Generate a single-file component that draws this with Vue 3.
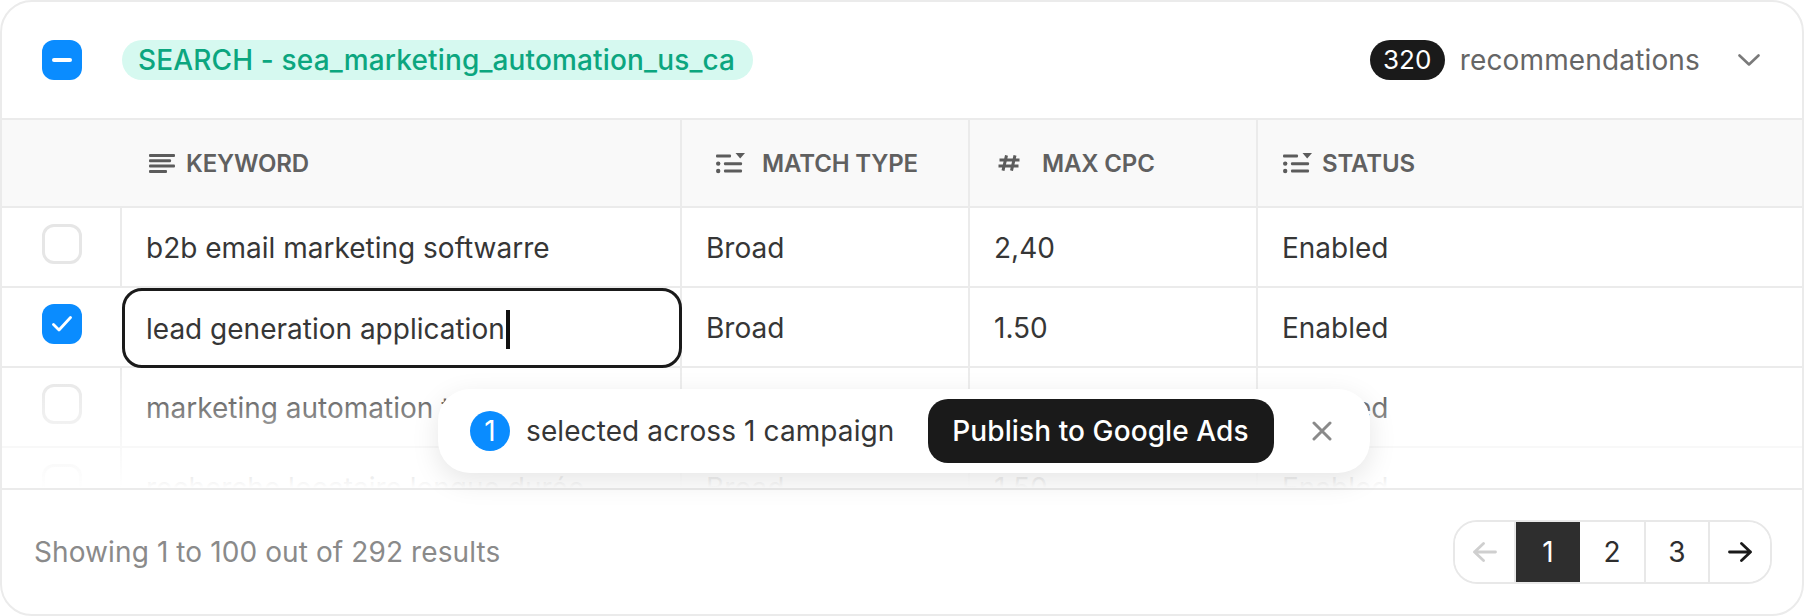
<template>
  <div class="card">
    <div class="top">
      <span class="check on">
        <svg width="20" height="4" viewBox="0 0 20 4"><rect width="20" height="4" rx="2" fill="#fff" /></svg>
      </span>
      <span class="pill">SEARCH - sea_marketing_automation_us_ca</span>
      <span class="count">320</span>
      <span class="rec">recommendations</span>
      <svg class="chevron" width="22" height="12" viewBox="0 0 22 12" fill="none" stroke="#7a7a7a" stroke-width="2.6" stroke-linecap="round" stroke-linejoin="round">
        <path d="M1.5 1.5 11 10.5l9.5-9" />
      </svg>
    </div>

    <div class="head">
      <div class="hcell first"></div>
      <div class="hcell h-keyword">
        <svg width="26" height="19" viewBox="0 0 26 19" fill="#5c5c5c">
          <rect width="26" height="3" y="0" rx="1" />
          <rect width="22" height="3" y="5.2" rx="1" />
          <rect width="26" height="3" y="10.6" rx="1" />
          <rect width="18" height="3" y="16" rx="1" />
        </svg>
        KEYWORD
      </div>
      <div class="hcell h-match">
        <svg width="29" height="21" viewBox="0 0 29 21" fill="#5c5c5c">
          <rect x="0" y="1.5" width="15" height="3" rx="1" />
          <path d="M19.5 0h9.5L24.2 5.5z" />
          <circle cx="2.2" cy="10.6" r="2.2" />
          <rect x="8" y="9.2" width="18" height="3" rx="1" />
          <circle cx="2.2" cy="18" r="2.2" />
          <rect x="8" y="16.6" width="18" height="3" rx="1" />
        </svg>
        MATCH TYPE
      </div>
      <div class="hcell h-cpc">
        <svg width="22" height="16" viewBox="0 0 22 16" fill="none" stroke="#5c5c5c" stroke-width="3">
          <path d="M8.5 0.3 5 15.7M17 0.3 13.5 15.7M1.5 5h20M0.5 11h20" />
        </svg>
        MAX CPC
      </div>
      <div class="hcell h-status">
        <svg width="29" height="21" viewBox="0 0 29 21" fill="#5c5c5c">
          <rect x="0" y="1.5" width="15" height="3" rx="1" />
          <path d="M19.5 0h9.5L24.2 5.5z" />
          <circle cx="2.2" cy="10.6" r="2.2" />
          <rect x="8" y="9.2" width="18" height="3" rx="1" />
          <circle cx="2.2" cy="18" r="2.2" />
          <rect x="8" y="16.6" width="18" height="3" rx="1" />
        </svg>
        STATUS
      </div>
    </div>

    <div class="body">
      <div v-for="row in rows" :key="row.keyword" class="row">
        <div class="cell pick">
          <span v-if="row.editing" class="check on">
            <svg width="20" height="16" viewBox="0 0 20 16" fill="none" stroke="#fff" stroke-width="2.8" stroke-linecap="round" stroke-linejoin="round">
              <path d="M1.5 8.5 7 14 18.5 1.5" />
            </svg>
          </span>
          <span v-else class="check"></span>
        </div>
        <div class="cell" :class="{ editing: row.editing }">
          {{ row.keyword }}<span v-if="row.editing" class="caret"></span>
        </div>
        <div class="cell">{{ row.match }}</div>
        <div class="cell">{{ row.cpc }}</div>
        <div class="cell">{{ row.status }}</div>
      </div>
      <div class="fade"></div>
    </div>

    <div class="foot">
      <span class="showing">Showing 1 to 100 out of 292 results</span>
      <div class="pager">
        <button class="page prev">
          <svg width="24" height="20" viewBox="0 0 24 20" fill="none" stroke="#cfcfcf" stroke-width="2.8" stroke-linecap="round" stroke-linejoin="round">
            <path d="M22.5 10h-21M10.5 1.5 1.5 10l9 8.5" />
          </svg>
        </button>
        <button class="page active">1</button>
        <button class="page">2</button>
        <button class="page ruled">3</button>
        <button class="page next">
          <svg width="24" height="20" viewBox="0 0 24 20" fill="none" stroke="#1a1a1a" stroke-width="2.8" stroke-linecap="round" stroke-linejoin="round">
            <path d="M1.5 10h21M13.5 1.5l9 8.5-9 8.5" />
          </svg>
        </button>
      </div>
    </div>

    <div class="toast">
      <span class="num">1</span>
      <span class="toast-text">selected across 1 campaign</span>
      <button class="publish">Publish to Google Ads</button>
      <svg class="close" width="20" height="20" viewBox="0 0 20 20" fill="none" stroke="#8a8a8a" stroke-width="3" stroke-linecap="round">
        <path d="M2 2l16 16M18 2 2 18" />
      </svg>
    </div>
  </div>
</template>

<script setup>
const rows = [
  { keyword: 'b2b email marketing softwarre', match: 'Broad', cpc: '2,40', status: 'Enabled' },
  { keyword: 'lead generation application', match: 'Broad', cpc: '1.50', status: 'Enabled', editing: true },
  { keyword: 'marketing automation tools', match: 'Broad', cpc: '1.50', status: 'Enabled' },
  { keyword: 'recherche locataire longue durée', match: 'Broad', cpc: '1.50', status: 'Enabled' },
]
</script>

<style>
body { margin: 0; background: #fff; }
</style>

<style scoped>
.card {
  position: relative;
  box-sizing: border-box;
  width: 1804px;
  height: 616px;
  display: flex;
  flex-direction: column;
  background: #fff;
  border: 2px solid #ebebeb;
  border-radius: 32px;
  overflow: hidden;
  font-family: Inter, "Liberation Sans", sans-serif;
  font-size: 28px;
  color: #363636;
}
.top {
  box-sizing: border-box;
  flex: none;
  height: 118px;
  display: flex;
  align-items: center;
  padding: 0 42px 0 40px;
  border-bottom: 2px solid #ebebeb;
}
.check {
  box-sizing: border-box;
  flex: none;
  width: 40px;
  height: 40px;
  display: flex;
  align-items: center;
  justify-content: center;
  border: 3px solid #e6e6e6;
  border-radius: 12px;
  background: #fff;
}
.check.on { background: #0a8cff; border: none; }
.pill {
  margin-left: 40px;
  height: 40px;
  line-height: 40px;
  padding: 0 18px 0 16px;
  border-radius: 20px;
  background: #d6f9f0;
  color: #0ca67f;
  font-weight: 500;
  letter-spacing: 0.15px;
}
.count {
  margin-left: auto;
  box-sizing: border-box;
  height: 40px;
  width: 75px;
  line-height: 40px;
  text-align: center;
  border-radius: 20px;
  background: #1a1a1a;
  color: #fff;
  font-size: 26px;
}
.rec { margin-left: 15px; color: #666; letter-spacing: 0.15px; }
.chevron { margin-left: 38px; }

.head,
.row {
  display: grid;
  grid-template-columns: 118px 560px 288px 288px 1fr;
}
.head {
  flex: none;
  box-sizing: border-box;
  height: 88px;
  background: #f9f9f9;
  border-bottom: 2px solid #ebebeb;
}
.hcell {
  display: flex;
  align-items: center;
  border-left: 2px solid #ebebeb;
  font-size: 24px;
  font-weight: 600;
  color: #606060;
  letter-spacing: -0.15px;
}
.hcell.first { border-left: none; }
.h-keyword { border-left: none; padding-left: 29px; gap: 11px; }
.h-match { padding-left: 34px; gap: 17px; }
.h-cpc { padding-left: 28px; gap: 22px; }
.h-status { padding-left: 25px; gap: 10px; }

.body {
  position: relative;
  flex: none;
  height: 280px;
  overflow: hidden;
}
.row {
  box-sizing: border-box;
  height: 80px;
  border-bottom: 2px solid #ebebeb;
}
.cell {
  position: relative;
  display: flex;
  align-items: center;
  border-left: 2px solid #ebebeb;
  padding: 2px 0 0 24px;
}
.cell.pick {
  border-left: none;
  padding: 16px 0 0 40px;
  align-items: flex-start;
}
.cell.editing {
  z-index: 1;
  margin: 0 -2px -2px 2px;
  background: #fff;
  border: 3px solid #1a1a1a;
  border-radius: 20px;
  padding-left: 21px;
}
.caret {
  width: 4px;
  height: 39px;
  background: #111;
  margin-left: 1px;
}
.fade {
  position: absolute;
  z-index: 2;
  left: 0;
  right: 0;
  bottom: 0;
  height: 121px;
  background: linear-gradient(to bottom, rgba(255, 255, 255, 0), #fff);
  pointer-events: none;
}

.foot {
  flex: 1;
  display: flex;
  align-items: center;
  justify-content: space-between;
  border-top: 2px solid #ebebeb;
  padding: 0 30px 0 32px;
}
.showing { color: #8a8a8a; letter-spacing: 0.1px; }
.pager {
  display: flex;
  height: 64px;
  box-sizing: border-box;
  border: 2px solid #e8e8e8;
  border-radius: 24px;
  overflow: hidden;
}
.page {
  box-sizing: border-box;
  width: 64px;
  display: flex;
  align-items: center;
  justify-content: center;
  padding: 0;
  border: none;
  background: #fff;
  font: inherit;
  color: #2e2e2e;
}
.page.prev { width: 61px; border-right: 2px solid #e8e8e8; }
.page.active { background: #2e2e2e; color: #fff; }
.page.ruled { width: 66px; border-left: 2px solid #e8e8e8; border-right: 2px solid #e8e8e8; }
.page.next { width: 60px; }

.toast {
  position: absolute;
  z-index: 3;
  left: 436px;
  top: 387px;
  box-sizing: border-box;
  width: 932px;
  height: 84px;
  display: flex;
  align-items: center;
  padding-left: 32px;
  background: #fff;
  border-radius: 32px;
  box-shadow: 0 8px 28px rgba(0, 0, 0, 0.1);
}
.num {
  flex: none;
  width: 40px;
  height: 40px;
  line-height: 40px;
  text-align: center;
  border-radius: 50%;
  background: #0a8cff;
  color: #fff;
}
.toast-text { margin-left: 16px; letter-spacing: 0.1px; }
.publish {
  margin-left: 34px;
  height: 64px;
  width: 346px;
  padding: 0 2px 0 0;
  border: none;
  border-radius: 20px;
  background: #1a1a1a;
  color: #fff;
  font: inherit;
  font-weight: 500;
  letter-spacing: 0.1px;
}
.close { margin-left: 38px; }
</style>
